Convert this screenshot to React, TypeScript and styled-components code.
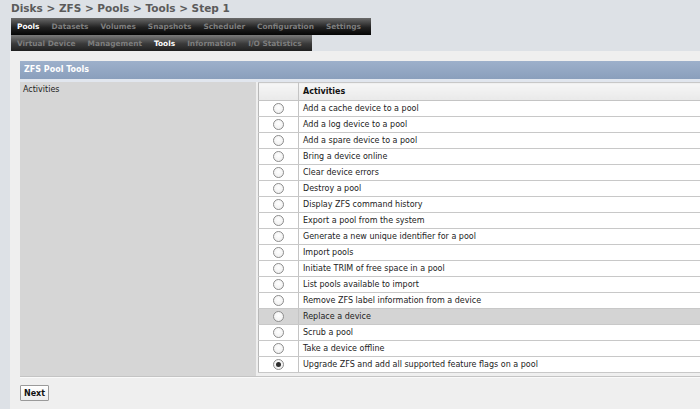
import React from "react";
import styled, { createGlobalStyle } from "styled-components";

const Global = createGlobalStyle`
  html, body { margin: 0; padding: 0; }
  body {
    background: #dde1e6;
    font-family: "DejaVu Sans", Verdana, sans-serif;
    font-size: 8px;
    color: #222;
    overflow: hidden;
    width: 700px;
    height: 409px;
  }
`;

const Page = styled.div`
  display: flex;
  flex-direction: column;
  width: 700px;
  height: 409px;
`;

const Top = styled.div`
  padding: 2px 0 0 11px;
  display: flex;
  flex-direction: column;
  align-items: flex-start;
`;

const Title = styled.h1`
  margin: 0 0 3px 0;
  font-size: 10.5px;
  font-weight: bold;
  color: #5b5b5b;
  line-height: 13px;
`;

const TabBar = styled.div<{ $second?: boolean }>`
  display: flex;
  align-items: center;
  height: ${(p) => (p.$second ? 16 : 17)}px;
  padding: 0 4px 0 0;
  background: ${(p) =>
    p.$second
      ? "linear-gradient(#7a7a7a, #3a3a3a 55%, #202020)"
      : "linear-gradient(#6a6a6a, #222 55%, #050505)"};
`;

const Tab = styled.span<{ $active?: boolean }>`
  padding: 0 6px;
  font-weight: bold;
  font-size: 7.4px;
  color: ${(p) => (p.$active ? "#ffffff" : "#7d7d7d")};
  white-space: nowrap;
`;

const Content = styled.div`
  flex: 1;
  margin-left: 10px;
  background: #efefef;
  padding: 10px 0 0 10px;
  display: flex;
  flex-direction: column;
  align-items: flex-start;
`;

const Panel = styled.div`
  width: 680px;
  display: flex;
  flex-direction: column;
`;

const PanelHead = styled.div`
  height: 18px;
  line-height: 18px;
  padding-left: 4px;
  background: linear-gradient(#9db0cb, #8a9fbc);
  color: #fff;
  font-weight: bold;
  font-size: 8px;
  border-bottom: 3px solid #e1e6ee;
`;

const PanelRow = styled.div`
  display: flex;
  border-bottom: 1px solid #c4c4c4;
  box-shadow: 0 1px 0 #fafafa;
`;

const LabelCell = styled.div`
  width: 233px;
  padding: 3px 0 0 3px;
  background: #d6d6d6;
  color: #222;
`;

const FieldCell = styled.div`
  flex: 1;
  padding: 0 0 3px 2px;
  background: #efefef;
`;

const Table = styled.table`
  width: 100%;
  border-collapse: collapse;
  background: #fff;
  border-left: 1px solid #b8b8b8;
  border-top: 1px solid #c8c8c8;
`;

const HeadCell = styled.th`
  height: 17px;
  padding: 0 4px;
  text-align: left;
  font-size: 8px;
  font-weight: bold;
  color: #111;
  background: linear-gradient(#f6f6f6, #e9e9e9);
  border-bottom: 1px solid #c4c4c4;
  &:first-child { width: 31px; border-right: 1px solid #c4c4c4; }
`;

const Row = styled.tr<{ $hl?: boolean }>`
  background: ${(p) => (p.$hl ? "#d4d4d4" : "#ffffff")};
`;

const Cell = styled.td`
  height: 15px;
  padding: 0 4px;
  border-bottom: 1px solid #c8c8c8;
  color: #222;
  font-size: 8px;
  white-space: nowrap;
  &:first-child { text-align: center; border-right: 1px solid #c4c4c4; }
`;

const Radio = styled.span<{ $on?: boolean }>`
  display: inline-block;
  vertical-align: middle;
  width: 9px;
  height: 9px;
  border-radius: 50%;
  border: 1px solid #8c8c8c;
  background: radial-gradient(circle at 50% 40%, #ffffff, #ececec);
  position: relative;
  &::after {
    content: "";
    display: ${(p) => (p.$on ? "block" : "none")};
    position: absolute;
    left: 2px;
    top: 2px;
    width: 5px;
    height: 5px;
    border-radius: 50%;
    background: #2e2e2e;
  }
`;

const Button = styled.button`
  margin-top: 8px;
  height: 16px;
  padding: 0 3px;
  font-family: "DejaVu Sans", Verdana, sans-serif;
  font-size: 8px;
  font-weight: bold;
  color: #111;
  background: linear-gradient(#ffffff, #ececec);
  border: 1px solid #9a9a9a;
  border-radius: 1px;
`;

const topTabs = ["Pools", "Datasets", "Volumes", "Snapshots", "Scheduler", "Configuration", "Settings"];
const subTabs = ["Virtual Device", "Management", "Tools", "Information", "I/O Statistics"];

const activities = [
  "Add a cache device to a pool",
  "Add a log device to a pool",
  "Add a spare device to a pool",
  "Bring a device online",
  "Clear device errors",
  "Destroy a pool",
  "Display ZFS command history",
  "Export a pool from the system",
  "Generate a new unique identifier for a pool",
  "Import pools",
  "Initiate TRIM of free space in a pool",
  "List pools available to import",
  "Remove ZFS label information from a device",
  "Replace a device",
  "Scrub a pool",
  "Take a device offline",
  "Upgrade ZFS and add all supported feature flags on a pool",
];

export default function App() {
  return (
    <>
      <Global />
      <Page>
        <Top>
          <Title>Disks &gt; ZFS &gt; Pools &gt; Tools &gt; Step 1</Title>
          <TabBar>
            {topTabs.map((t) => (
              <Tab key={t} $active={t === "Pools"}>{t}</Tab>
            ))}
          </TabBar>
          <TabBar $second>
            {subTabs.map((t) => (
              <Tab key={t} $active={t === "Tools"}>{t}</Tab>
            ))}
          </TabBar>
        </Top>
        <Content>
          <Panel>
            <PanelHead>ZFS Pool Tools</PanelHead>
            <PanelRow>
              <LabelCell>Activities</LabelCell>
              <FieldCell>
                <Table>
                  <thead>
                    <tr>
                      <HeadCell />
                      <HeadCell>Activities</HeadCell>
                    </tr>
                  </thead>
                  <tbody>
                    {activities.map((a, i) => (
                      <Row key={a} $hl={a === "Replace a device"}>
                        <Cell><Radio $on={i === activities.length - 1} /></Cell>
                        <Cell>{a}</Cell>
                      </Row>
                    ))}
                  </tbody>
                </Table>
              </FieldCell>
            </PanelRow>
          </Panel>
          <Button>Next</Button>
        </Content>
      </Page>
    </>
  );
}
